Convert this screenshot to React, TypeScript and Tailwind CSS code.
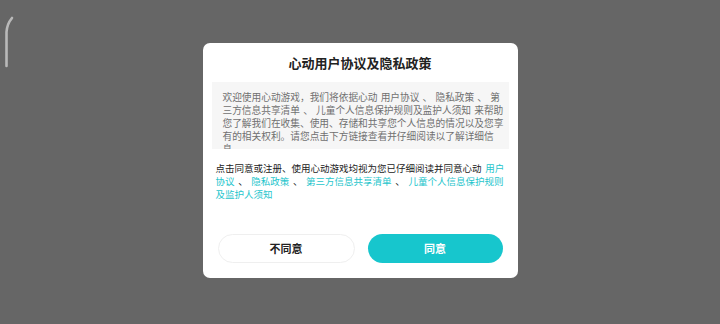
export default function App() {
  const link = "text-[#1ec5cc]";
  return (
    <div
      className="relative flex h-[324px] w-[720px] items-start justify-center overflow-hidden bg-[#666666] pt-[43px]"
      style={{ fontFamily: '"Noto Sans CJK SC", "Noto Sans", sans-serif' }}
    >
      <svg className="absolute left-0 top-0" width="20" height="80" viewBox="0 0 20 80">
        <path d="M12 18 Q7 24 6.5 32 L6.5 66" fill="none" stroke="#b9b9b9" strokeWidth="2.6" strokeLinecap="round" />
      </svg>

      <div className="flex h-[235px] w-[315px] flex-col rounded-[7px] bg-white px-[9px] pb-[15px] pt-[11px]">
        <h1 className="text-center text-[13px] font-bold leading-[18px] text-[#222]">心动用户协议及隐私政策</h1>

        <div className="mt-[10px] h-[67px] overflow-hidden bg-[#f6f6f6] pl-[11px] pt-[9px]">
          <p className="w-[286px] whitespace-nowrap text-[9.7px] leading-[13px] text-[#707070] [word-spacing:1px]">
            欢迎使用心动游戏，我们将依据心动 用户协议 、 隐私政策 、 第<br />
            三方信息共享清单 、 儿童个人信息保护规则及监护人须知 来帮助<br />
            您了解我们在收集、使用、存储和共享您个人信息的情况以及您享<br />
            有的相关权利。请您点击下方链接查看并仔细阅读以了解详细信<br />
            息。
          </p>
        </div>

        <p className="mt-[13px] pl-[4px] pr-[3px] text-[9.5px] leading-[13px] text-[#222] [word-spacing:1.5px]">
          点击同意或注册、使用心动游戏均视为您已仔细阅读并同意心动 <span className={link}>用户协议</span> 、{" "}
          <span className={link}>隐私政策</span> 、 <span className={link}>第三方信息共享清单</span> 、{" "}
          <span className={link}>儿童个人信息保护规则及监护人须知</span>
        </p>

        <div className="mt-auto flex gap-[13px] px-[6px]">
          <button className="h-[29px] flex-1 rounded-full border border-[#efefef] bg-white text-[11px] font-bold text-[#222]">
            不同意
          </button>
          <button className="h-[29px] flex-1 rounded-full bg-[#17c6cd] text-[11px] font-bold text-white">
            同意
          </button>
        </div>
      </div>
    </div>
  );
}
